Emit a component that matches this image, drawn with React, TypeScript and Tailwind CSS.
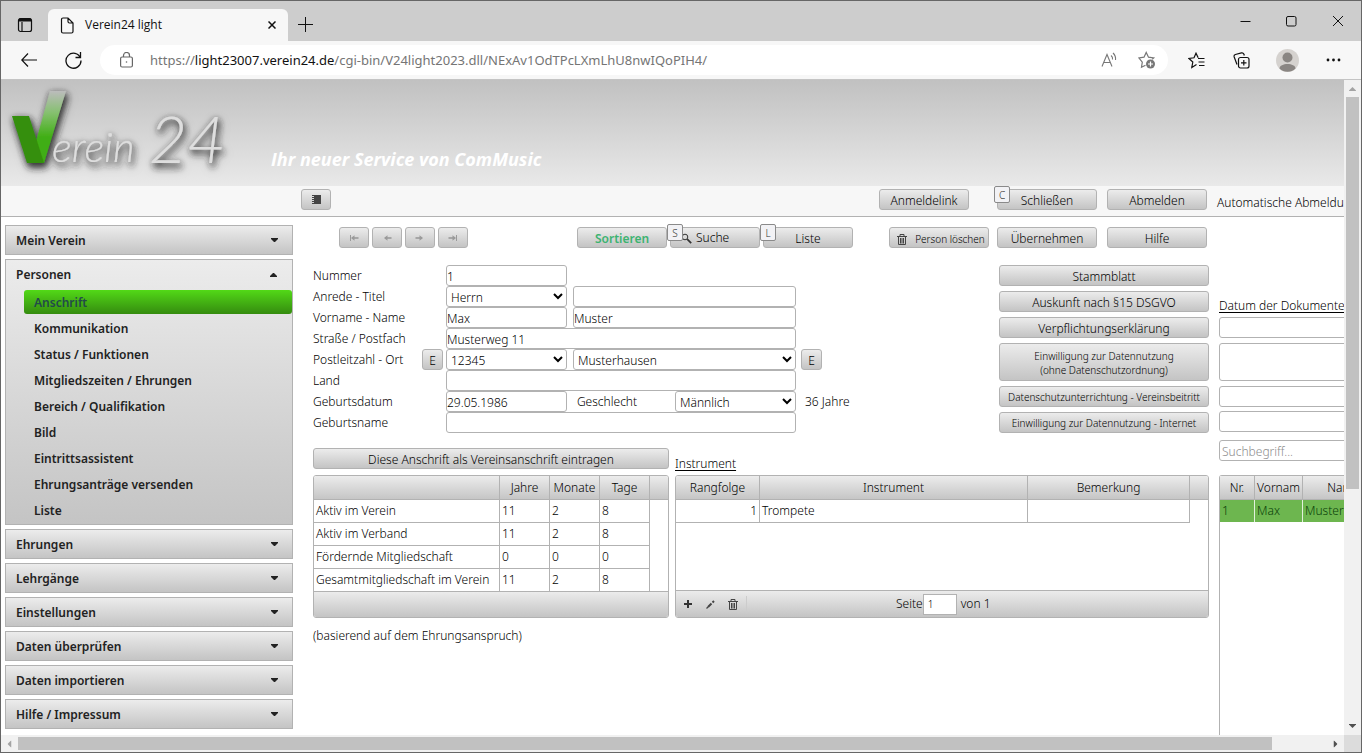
import type { ReactNode } from "react";
import { clsx } from "clsx";
import { twMerge } from "tailwind-merge";

const GREY = "bg-linear-to-b from-[#ececec] to-[#c4c4c4]";
const BTN =
  "flex shrink-0 items-center justify-center rounded-[3px] border border-[#b2b2b2] bg-linear-to-b from-[#ececec] to-[#c4c4c4] text-black";
const FIELD = "block h-[21px] rounded-[3px] border border-[#b2b2b2] bg-white pt-px text-[12px] text-black";

const menuTop = ["Mein Verein"];
const menuBottom = ["Ehrungen", "Lehrgänge", "Einstellungen", "Daten überprüfen", "Daten importieren", "Hilfe / Impressum"];
const personItems = [
  "Anschrift",
  "Kommunikation",
  "Status / Funktionen",
  "Mitgliedszeiten / Ehrungen",
  "Bereich / Qualifikation",
  "Bild",
  "Eintrittsassistent",
  "Ehrungsanträge versenden",
  "Liste",
];

const memberTimes = [
  ["Aktiv im Verein", "11", "2", "8"],
  ["Aktiv im Verband", "11", "2", "8"],
  ["Fördernde Mitgliedschaft", "0", "0", "0"],
  ["Gesamtmitgliedschaft im Verein", "11", "2", "8"],
];

function Button({ children, className, hotkey }: { children: ReactNode; className?: string; hotkey?: string }) {
  return (
    <span className="relative shrink-0">
      <button type="button" className={twMerge(BTN, "h-[21px] pt-[3px] leading-4", className)}>
        {children}
      </button>
      {hotkey ? (
        <kbd className="absolute -top-[3px] -left-[3px] flex h-[17px] w-4 items-center justify-center rounded-[2px] border border-[#8a8a8a] bg-[#f2f2f5] text-[10px] text-[#333] [font-family:'Noto_Sans',sans-serif]">
          {hotkey}
        </kbd>
      ) : null}
    </span>
  );
}

function Trash() {
  return (
    <svg width="10" height="11" viewBox="0 0 10 11" fill="none" stroke="#444" aria-hidden="true">
      <path d="M0 2.5h10M3 2.5V.5h4v2M1.5 3v7.5h7V3M3.5 4v5.5M5 4v5.5M6.5 4v5.5" />
    </svg>
  );
}

function NavArrow({ dir, bar }: { dir: "left" | "right"; bar?: boolean }) {
  return (
    <svg
      width="10"
      height="8"
      viewBox="0 0 10 8"
      stroke="#9a9a9a"
      fill="none"
      className={dir === "right" ? "-scale-x-100" : undefined}
      aria-hidden="true"
    >
      {bar ? <path d="M1.5 1v6" /> : null}
      <path d="M3 4h6.5" strokeWidth="1.6" />
      <path d="M5.5 1.3v5.4L2 4z" fill="#9a9a9a" stroke="none" />
    </svg>
  );
}

function Caret({ up }: { up?: boolean }) {
  return (
    <svg width="7" height="4" viewBox="0 0 7 4" fill="#222" className={up ? "rotate-180" : undefined} aria-hidden="true">
      <path d="M0 0h7v1L4 4H3L0 1z" />
    </svg>
  );
}

function BrowserBar() {
  return (
    <header className="shrink-0 font-normal [font-family:'Open_Sans',sans-serif]">
      <div className="flex h-10 items-end bg-[#cdcdcd]">
        <button type="button" aria-label="Tabs" className="mb-2 ml-4 shrink-0">
          <svg width="16" height="16" viewBox="0 0 16 16" fill="none" stroke="#111" strokeWidth="1.2">
            <rect x="1.5" y="1.5" width="13" height="13" rx="2" />
            <path d="M5 5v9.5" />
            <path d="M2 3h12" strokeWidth="3" />
          </svg>
        </button>
        <div className="ml-[15px] flex h-8 w-60 shrink-0 items-center rounded-t-md bg-[#f7f7f7] pr-3 pl-3 text-[12px] text-[#111]">
          <svg width="14" height="17" viewBox="0 0 14 17" fill="none" stroke="#111" strokeWidth="1.2" aria-hidden="true">
            <path d="M3 1h5l5 5v8.500a1.500 1.500 0 0 1-1.500 1.500h-8.500A1.500 1.500 0 0 1 1.500 14.500v-12A1.500 1.500 0 0 1 3 1zM8 1v3.500A1.500 1.500 0 0 0 9.500 6H13" />
          </svg>
          <span className="ml-[11px] flex-1">Verein24 light</span>
          <button type="button" aria-label="Tab schließen">
            <svg width="8" height="8" viewBox="0 0 8 8" stroke="#111" strokeWidth="1.500">
              <path d="M.5.5l7 7M7.500.5l-7 7" />
            </svg>
          </button>
        </div>
        <button type="button" aria-label="Neuer Tab" className="mb-[9px] ml-[10px]">
          <svg width="15" height="15" viewBox="0 0 15 15" stroke="#111">
            <path d="M7.500 0v15M0 7.500h15" />
          </svg>
        </button>
        <div className="mr-[17px] mb-[14px] ml-auto flex items-center gap-[35px]">
          <button type="button" aria-label="Minimieren">
            <svg width="11" height="11" viewBox="0 0 11 11" stroke="#111">
              <path d="M.5 5.500h10" />
            </svg>
          </button>
          <button type="button" aria-label="Maximieren">
            <svg width="11" height="11" viewBox="0 0 11 11" fill="none" stroke="#111">
              <rect x=".5" y=".5" width="9.500" height="9.500" rx="1.500" />
            </svg>
          </button>
          <button type="button" aria-label="Schließen">
            <svg width="12" height="12" viewBox="0 0 12 12" stroke="#111">
              <path d="M1 1l10 10M11 1L1 11" />
            </svg>
          </button>
        </div>
      </div>
      <div className="flex h-[39px] items-center border-b border-[#c4c4c4] bg-[#f7f7f7]">
        <button type="button" aria-label="Zurück" className="ml-5">
          <svg width="16" height="14" viewBox="0 0 16 14" fill="none" stroke="#111" strokeWidth="1.200">
            <path d="M16 7H1M7 .5L.8 7 7 13.500" />
          </svg>
        </button>
        <button type="button" aria-label="Neu laden" className="ml-7">
          <svg width="17" height="18" viewBox="0 0 17 18" fill="none" stroke="#111" strokeWidth="1.300">
            <path d="M15.500 7A7.500 7.500 0 1 0 16 9.500M15.500 1v5.500h-5" />
          </svg>
        </button>
        <div className="ml-[18px] flex h-[30px] min-w-0 flex-1 items-center rounded-full bg-white pr-3 pl-5">
          <svg width="13" height="16" viewBox="0 0 13 16" fill="none" stroke="#666" strokeWidth="1.200" aria-hidden="true">
            <rect x=".6" y="5" width="11.800" height="10" rx="1.500" />
            <path d="M3.500 5V3.500a3 3 0 0 1 6 0V5" />
            <circle cx="6.500" cy="10" r=".8" fill="#666" stroke="none" />
          </svg>
          <p className="ml-[17px] min-w-0 flex-1 truncate text-[13px] text-[#757575] [font-family:'Noto_Sans',sans-serif]">
            https://<span className="text-[#111]">light23007.verein24.de</span>
            /cgi-bin/V24light2023.dll/NExAv1OdTPcLXmLhU8nwIQoPIH4/
          </p>
          <button type="button" aria-label="Laut vorlesen">
            <svg width="17" height="16" viewBox="0 0 17 16" fill="none" stroke="#777" strokeWidth="1.100">
              <path d="M1 14.500L6 2.500l5 12M2.700 10.500h6.600M10 3.500a4 4 0 0 1 1.500 4M12 1a8 8 0 0 1 2.500 7" />
            </svg>
          </button>
          <button type="button" aria-label="Zu Favoriten" className="ml-5">
            <svg width="18" height="18" viewBox="0 0 18 18" fill="none" stroke="#777" strokeWidth="1.200">
              <path d="M7.500 14.200l-4 2 .8-5L1 7l5-.8L8.200 1.500l2.300 4.700 5.200.8-1.500 1.300" />
              <circle cx="12.500" cy="13" r="4.500" fill="#777" stroke="none" />
              <path d="M12.500 10.500v5M10 13h5" stroke="#fff" />
            </svg>
          </button>
        </div>
        <div className="mr-5 ml-5 flex shrink-0 items-center">
          <button type="button" aria-label="Favoriten">
            <svg width="17" height="17" viewBox="0 0 17 17" fill="none" stroke="#111" strokeWidth="1.200">
              <path d="M8.500 12.500L3.800 15.500 4.800 10 1 6.500l5-.7L8 1.200l2.200 4.600M10 6.500h6.500M10.500 10h6M11 13.500h5.500" />
            </svg>
          </button>
          <button type="button" aria-label="Sammlungen" className="ml-7">
            <svg width="17" height="17" viewBox="0 0 17 17" fill="none" stroke="#111" strokeWidth="1.200">
              <rect x="5.500" y="5.500" width="10.500" height="10.500" rx="2" />
              <path d="M10.800 8v5.500M8 10.800h5.500M4 12.500L1.200 5a2 2 0 0 1 1.200-2.500L8.500.9A2 2 0 0 1 11 2.500l.3 1" />
            </svg>
          </button>
          <button type="button" aria-label="Profil" className="ml-[26px]">
            <svg width="23" height="23" viewBox="0 0 23 23">
              <circle cx="11.500" cy="11.500" r="11.500" fill="#d5d2cf" />
              <circle cx="11.500" cy="8.500" r="5" fill="#8a8683" />
              <path d="M3.500 19.500c0-6 16-6 16 0a11.500 11.500 0 0 1-16 0z" fill="#8a8683" />
            </svg>
          </button>
          <button type="button" aria-label="Mehr" className="ml-[27px]">
            <svg width="15" height="4" viewBox="0 0 15 4" fill="#111">
              <circle cx="2" cy="2" r="1.400" />
              <circle cx="7.500" cy="2" r="1.400" />
              <circle cx="13" cy="2" r="1.400" />
            </svg>
          </button>
        </div>
      </div>
    </header>
  );
}

function Logo() {
  return (
    <svg width="240" height="105" viewBox="0 0 240 105" role="img" aria-label="Verein 24" className="shrink-0">
      <defs>
        <linearGradient id="check" x1="0" y1="0" x2="0" y2="1">
          <stop offset="0" stopColor="#bcbcbc" />
          <stop offset=".3" stopColor="#86c070" />
          <stop offset=".65" stopColor="#3fae12" />
          <stop offset="1" stopColor="#3fae12" />
        </linearGradient>
        <filter id="glow" x="-20%" y="-20%" width="140%" height="150%">
          <feDropShadow dx="2" dy="4" stdDeviation="3" floodColor="#333" floodOpacity=".9" />
          <feDropShadow dx="0" dy="1" stdDeviation="3" floodColor="#444" floodOpacity=".6" />
        </filter>
      </defs>
      <g filter="url(#glow)">
        <path d="M49 11h16L43 83H29z" fill="url(#check)" />
        <path d="M11 36h17l15 47H26z" fill="#368f10" />
        <g fill="#dedede" fontStyle="italic" className="[font-family:Lato,sans-serif]">
          <text x="51" y="82" fontSize="42" fontWeight="300">
            erein
          </text>
          <text x="148" y="83" fontSize="66" fontWeight="300">
            24
          </text>
        </g>
      </g>
    </svg>
  );
}

function MenuPanel({ label }: { label: string }) {
  return (
    <button
      type="button"
      className={clsx(GREY, "flex h-[30px] w-full items-center justify-between border border-[#b2b2b2] pr-[14px] pl-[10px]")}
    >
      <span className="pt-[2px]">{label}</span>
      <Caret />
    </button>
  );
}

function Sidebar() {
  return (
    <nav className="flex w-72 shrink-0 flex-col gap-1 text-[12px] font-semibold text-[#222]">
      {menuTop.map((m) => (
        <MenuPanel key={m} label={m} />
      ))}
      <div className={clsx(GREY, "border border-[#b2b2b2] pb-px")}>
        <button type="button" className="flex h-[29px] w-full items-center justify-between pr-[15px] pl-[10px]">
          Personen
          <Caret up />
        </button>
        <ul className="pl-[18px]">
          {personItems.map((item, i) => (
            <li key={item} className="py-px">
              <a
                href="#"
                className={clsx(
                  "flex h-6 items-center rounded-[3px] pt-[2px] pl-[10px]",
                  i === 0 && "bg-linear-to-b from-[#52d917] to-[#358c0f] text-[#234a4a]",
                )}
              >
                {item}
              </a>
            </li>
          ))}
        </ul>
      </div>
      {menuBottom.map((m) => (
        <MenuPanel key={m} label={m} />
      ))}
    </nav>
  );
}

function FormRow({ id, label, children, extra, before }: { id: string; label: string; children: ReactNode; extra?: ReactNode; before?: ReactNode }) {
  return (
    <div className="flex h-[21px] items-center">
      <label htmlFor={id} className="w-[109px] shrink-0">
        {label}
      </label>
      <div className="w-6 shrink-0">{before}</div>
      <div className="flex w-[350px] shrink-0 items-center justify-between">{children}</div>
      {extra}
    </div>
  );
}

function AddressForm() {
  const small = clsx(FIELD, "w-[121px]");
  const large = clsx(FIELD, "w-[223px]");
  return (
    <form className="flex flex-col">
      <FormRow id="nummer" label="Nummer">
        <input id="nummer" className={small} defaultValue="1" />
      </FormRow>
      <FormRow id="anrede" label="Anrede - Titel">
        <select id="anrede" className={small}>
          <option>Herrn</option>
        </select>
        <input aria-label="Titel" className={large} />
      </FormRow>
      <FormRow id="vorname" label="Vorname - Name">
        <input id="vorname" className={small} defaultValue="Max" />
        <input aria-label="Name" className={large} defaultValue="Muster" />
      </FormRow>
      <FormRow id="strasse" label="Straße / Postfach">
        <input id="strasse" className={clsx(FIELD, "w-full")} defaultValue="Musterweg 11" />
      </FormRow>
      <FormRow
        id="plz"
        label="Postleitzahl - Ort"
        before={<Button className="w-[21px]">E</Button>}
        extra={
          <div className="ml-[5px]">
            <Button className="w-[21px]">E</Button>
          </div>
        }
      >
        <select id="plz" className={small}>
          <option>12345</option>
        </select>
        <select aria-label="Ort" className={large}>
          <option>Musterhausen</option>
        </select>
      </FormRow>
      <FormRow id="land" label="Land">
        <input id="land" className={clsx(FIELD, "w-full")} />
      </FormRow>
      <FormRow id="geburt" label="Geburtsdatum" extra={<span className="ml-[9px]">36 Jahre</span>}>
        <input id="geburt" className={small} defaultValue="29.05.1986" />
        <label htmlFor="geschlecht" className="mr-7">
          Geschlecht
        </label>
        <select id="geschlecht" className={small}>
          <option>Männlich</option>
        </select>
      </FormRow>
      <FormRow id="geburtsname" label="Geburtsname">
        <input id="geburtsname" className={clsx(FIELD, "w-full")} />
      </FormRow>
    </form>
  );
}

function DocumentButtons() {
  return (
    <div className="flex flex-col gap-[5px]">
      <Button className="w-[210px]">Stammblatt</Button>
      <Button className="w-[210px]">Auskunft nach §15 DSGVO</Button>
      <Button className="w-[210px]">Verpflichtungserklärung</Button>
      <button type="button" className={clsx(BTN, "h-[38px] w-[210px] pt-px text-[10px] leading-[14px]")}>
        Einwilligung zur Datennutzung
        <br />
        (ohne Datenschutzordnung)
      </button>
      <Button className="w-[210px] pt-px text-[10px]">Datenschutzunterrichtung - Vereinsbeitritt</Button>
      <Button className="w-[210px] pt-px text-[10px]">Einwilligung zur Datennutzung - Internet</Button>
    </div>
  );
}

const TH = "h-6 border-r border-[#b2b2b2] p-0 font-light";
const TD = "h-[23px] border-r border-b border-[#b2b2b2] px-[2px] py-0";

function TimesTable() {
  return (
    <div className="flex h-[143px] w-[356px] flex-col overflow-hidden rounded-[3px] border border-[#b2b2b2]">
      <table className="w-full table-fixed border-separate border-spacing-0">
        <colgroup>
          <col className="w-[186px]" />
          <col className="w-[50px]" />
          <col className="w-[50px]" />
          <col className="w-[50px]" />
          <col />
        </colgroup>
        <thead className={GREY}>
          <tr>
            {["", "Jahre", "Monate", "Tage"].map((h) => (
              <th key={h} className={clsx(TH, "border-b")}>
                {h}
              </th>
            ))}
            <th className="border-b border-[#b2b2b2]" />
          </tr>
        </thead>
        <tbody>
          {memberTimes.map((row) => (
            <tr key={row[0]}>
              {row.map((cell, i) => (
                <td key={i} className={TD}>
                  {cell}
                </td>
              ))}
              <td />
            </tr>
          ))}
        </tbody>
      </table>
      <div className={clsx(GREY, "-mt-px flex-1 border-t border-[#b2b2b2]")} />
    </div>
  );
}

function InstrumentTable() {
  return (
    <div className="flex h-[143px] flex-col overflow-hidden rounded-[3px] border border-[#b2b2b2]">
      <table className="w-full table-fixed border-separate border-spacing-0">
        <colgroup>
          <col className="w-[84px]" />
          <col className="w-[268px]" />
          <col className="w-[162px]" />
          <col />
        </colgroup>
        <thead className={GREY}>
          <tr>
            {["Rangfolge", "Instrument", "Bemerkung"].map((h) => (
              <th key={h} className={clsx(TH, "border-b")}>
                {h}
              </th>
            ))}
            <th className="border-b border-[#b2b2b2]" />
          </tr>
        </thead>
        <tbody>
          <tr>
            <td className={clsx(TD, "text-right")}>1</td>
            <td className={TD}>Trompete</td>
            <td className={TD} />
            <td />
          </tr>
        </tbody>
      </table>
      <div className={clsx(GREY, "mt-auto flex h-[27px] items-center border-t border-[#b2b2b2] pl-2")}>
        <button type="button" aria-label="Hinzufügen">
          <svg width="8" height="8" viewBox="0 0 8 8" stroke="#333" strokeWidth="2">
            <path d="M4 0v8M0 4h8" />
          </svg>
        </button>
        <button type="button" aria-label="Bearbeiten" className="ml-[14px]">
          <svg width="9" height="9" viewBox="0 0 9 9" stroke="#444" strokeWidth="2">
            <path d="M.5 8.500l1.500-1.500" strokeWidth="1.200" />
            <path d="M2 7l3.500-3.500M6.500 2.500L8 1" />
          </svg>
        </button>
        <button type="button" aria-label="Löschen" className="ml-[13px]">
          <Trash />
        </button>
        <span className="ml-2 h-4 w-px bg-[#ccc]" />
        <label htmlFor="seite" className="ml-[149px]">
          Seite
        </label>
        <input
          id="seite"
          defaultValue="1"
          className="h-[21px] w-[34px] border border-[#b2b2b2] bg-white pl-1 text-[10px]"
        />
        <span className="ml-1">von 1</span>
      </div>
    </div>
  );
}

function DocumentDates() {
  return (
    <aside className="flex w-[260px] shrink-0 flex-col">
      <h2 className="mt-[33px] h-[19px] font-light underline underline-offset-2">Datum der Dokumente</h2>
      <input aria-label="Verpflichtungserklärung" className={clsx(FIELD, "w-full")} />
      <input aria-label="Einwilligung" className="mt-[5px] h-[38px] w-full rounded-[3px] border border-[#b2b2b2] bg-white" />
      <input aria-label="Datenschutzunterrichtung" className={clsx(FIELD, "mt-[5px] w-full")} />
      <input aria-label="Einwilligung Internet" className={clsx(FIELD, "mt-1 w-full")} />
      <input
        aria-label="Suchbegriff"
        placeholder="Suchbegriff..."
        className={clsx(FIELD, "mt-2 w-full pl-[2px] placeholder:text-[#8c8c8c]")}
      />
      <div className="mt-[14px] flex-1 rounded-t-[3px] border border-b-0 border-[#b2b2b2]">
        <table className="w-full table-fixed border-separate border-spacing-0">
          <colgroup>
            <col className="w-[35px]" />
            <col className="w-12" />
            <col className="w-[82px]" />
            <col />
          </colgroup>
          <thead className={GREY}>
            <tr>
              {["Nr.", "Vornam", "Name", ""].map((h) => (
                <th key={h} className={clsx(TH, "border-b")}>
                  {h}
                </th>
              ))}
            </tr>
          </thead>
          <tbody>
            <tr className="bg-[#6db64f] text-[#0a3f0a]">
              {["1", "Max", "Muster", ""].map((c) => (
                <td key={c} className="h-[22px] border-r border-[#e3f1dd] px-[2px] py-0">
                  {c}
                </td>
              ))}
            </tr>
          </tbody>
        </table>
      </div>
    </aside>
  );
}

function ScrollArrow({ className, color }: { className?: string; color: string }) {
  return (
    <svg width="7" height="4" viewBox="0 0 7 4" fill={color} className={className} aria-hidden="true">
      <path d="M3.500 0L7 3.500V4H0v-.5z" />
    </svg>
  );
}

export default function App() {
  return (
    <div className="flex h-screen min-h-[753px] flex-col overflow-hidden border border-[#666] bg-white text-[12px] leading-4 font-light text-black [font-family:'Noto_Sans',sans-serif]">
      <BrowserBar />
      <div className="flex min-h-0 flex-1">
        <div className="flex min-w-0 flex-1 flex-col overflow-hidden">
          <div className="flex h-[106px] shrink-0 items-start bg-linear-to-b from-[#c1c1c1] to-[#e9e9e9]">
            <Logo />
            <p className="mt-[69px] ml-[30px] text-[18px] leading-5 font-bold text-white italic [font-family:'Open_Sans',sans-serif]">
              Ihr neuer Service von ComMusic
            </p>
          </div>
          <div className="flex h-[31px] shrink-0 items-start border-b border-[#b2b2b2] bg-[#f7f7f7] pt-[3px] pl-[300px] whitespace-nowrap">
            <Button className="w-[30px] pt-0">
              <svg width="9" height="9" viewBox="0 0 9 9" aria-label="Menü">
                <path d="M2 0h7v9H2z" fill="#444" />
                <path d="M0 .5h2M0 2.500h2M0 4.500h2M0 6.500h2M0 8.500h2" stroke="#444" />
              </svg>
            </Button>
            <div className="ml-[548px] flex items-start">
              <Button className="w-[90px]">Anmeldelink</Button>
              <div className="ml-7 flex gap-[10px]">
                <Button className="w-[100px]" hotkey="C">
                  Schließen
                </Button>
                <Button className="w-[100px]">Abmelden</Button>
                <span className="pt-[6px]">Automatische Abmeldung</span>
              </div>
            </div>
          </div>

          <div className="flex min-h-0 flex-1 overflow-hidden pt-2 pl-1">
            <Sidebar />
            <main className="ml-5 flex shrink-0 flex-col pt-[2px] whitespace-nowrap">
              <div className="flex items-start">
                <div className="ml-[26px] flex gap-[3px]">
                  <Button className="w-[30px] pt-0">
                    <NavArrow dir="left" bar />
                  </Button>
                  <Button className="w-[30px] pt-0">
                    <NavArrow dir="left" />
                  </Button>
                  <Button className="w-[30px] pt-0">
                    <NavArrow dir="right" />
                  </Button>
                  <Button className="w-[30px] pt-0">
                    <NavArrow dir="right" bar />
                  </Button>
                </div>
                <div className="ml-[109px] flex gap-[3px]">
                  <Button className="w-[90px] font-semibold text-[#3cb371]">Sortieren</Button>
                  <Button className="w-[90px] justify-start gap-1 pt-px pl-[10px]" hotkey="S">
                    <svg width="11" height="11" viewBox="0 0 11 11" fill="none" stroke="#333" aria-hidden="true">
                      <circle cx="4" cy="4" r="2.800" />
                      <path d="M6.200 6.200l4 4" strokeWidth="1.800" />
                    </svg>
                    Suche
                  </Button>
                  <Button className="w-[90px]" hotkey="L">
                    Liste
                  </Button>
                </div>
                <div className="ml-9 flex">
                  <Button className="w-[100px] gap-2 pl-1 text-[10px]">
                    <Trash />
                    Person löschen
                  </Button>
                </div>
                <div className="ml-2 flex gap-[10px]">
                  <Button className="w-[100px]">Übernehmen</Button>
                  <Button className="w-[100px]">Hilfe</Button>
                </div>
              </div>

              <div className="mt-[17px] flex flex-1 gap-[10px]">
                <div className="w-[896px]">
                  <div className="flex justify-between">
                    <AddressForm />
                    <DocumentButtons />
                  </div>
                  <div className="mt-[15px] flex gap-[6px]">
                    <div className="flex flex-col">
                      <Button className="w-[356px]">Diese Anschrift als Vereinsanschrift eintragen</Button>
                      <div className="mt-[6px]">
                        <TimesTable />
                      </div>
                      <p className="mt-[10px]">(basierend auf dem Ehrungsanspruch)</p>
                    </div>
                    <div className="flex-1">
                      <h2 className="mt-2 mb-[3px] font-light underline underline-offset-2">Instrument</h2>
                      <InstrumentTable />
                    </div>
                  </div>
                </div>
                <DocumentDates />
              </div>
            </main>
          </div>
        </div>
        <div className="flex w-[17px] shrink-0 flex-col items-center bg-[#f1f1f1]">
          <ScrollArrow className="mt-[7px]" color="#a3a3a3" />
          <div className="mt-[6px] h-[392px] w-[13px] bg-[#c1c1c1]" />
          <ScrollArrow className="mt-auto mb-[7px] rotate-180" color="#505050" />
        </div>
      </div>
      <div className="flex h-[17px] shrink-0 items-center bg-[#f1f1f1]">
        <ScrollArrow className="ml-[5px] -rotate-90" color="#a3a3a3" />
        <div className="ml-[5px] h-[13px] flex-1 bg-[#c1c1c1]" />
        <ScrollArrow className="mr-[5px] ml-[60px] rotate-90" color="#505050" />
        <div className="h-full w-[17px] bg-[#dcdcdc]" />
      </div>
    </div>
  );
}
